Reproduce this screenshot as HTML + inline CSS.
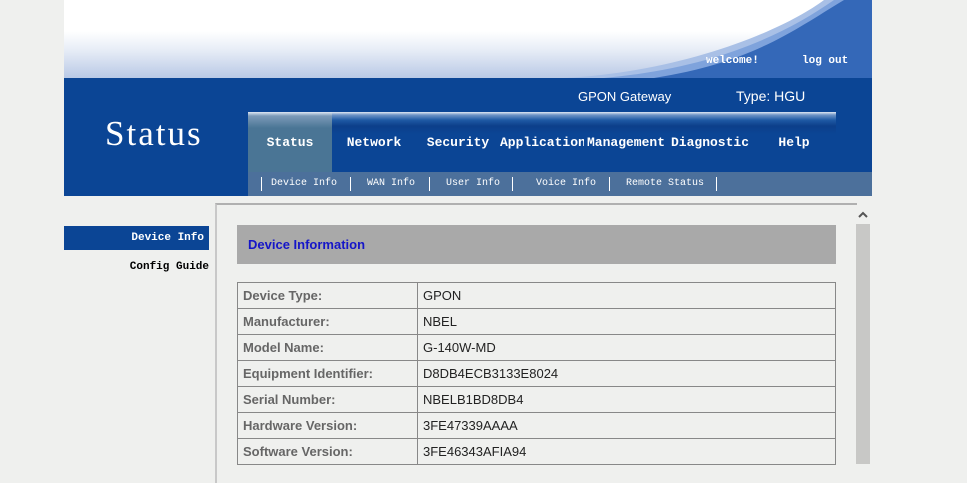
<!DOCTYPE html>
<html><head><style>
body{margin:0;width:967px;height:481px;background:#eff0ee;position:relative;overflow:hidden;font-family:"Liberation Sans",sans-serif}
.abs{position:absolute}
.mono{font-family:"Liberation Mono","Noto Serif CJK SC",monospace;font-weight:bold}
#top{left:64px;top:0;width:808px;height:78px;background:linear-gradient(#fff 0,#fff 40%,#e6ecf6 65%,#b9c9e6 100%);overflow:hidden}
#blue{left:64px;top:78px;width:808px;height:118px;background:#0b4595}
.tab{top:112px;height:60px;width:84px;color:#fff;font-size:13px;text-align:center;line-height:62px;background:linear-gradient(#e0e8f4 0,#6d93c6 3px,#1f5aa5 8px,#0c3f8a 14px,#0b4595 22px)}
.sub{left:248px;top:172px;width:624px;height:24px;background:#4c709b;color:#fff;font-size:10px;line-height:24px;font-family:"Liberation Mono",monospace}
.sub span{position:absolute;top:0}
.sub i{position:absolute;top:5px;width:1px;height:14px;background:#fff}
table{border-collapse:collapse;font-size:13px}
td{border:1px solid #888;height:25px;padding:0 0 0 5px}
td.l{font-weight:bold;color:#666;width:174px}
td.v{color:#222}
</style></head><body>
<div id="top" class="abs">
<svg width="808" height="78" style="position:absolute;left:0;top:0">
<path d="M500 78 C620 72 720 30 760 0 L808 0 L808 78 Z" fill="#a9c0e6"/>
<path d="M540 78 C650 68 720 35 770 0 L808 0 L808 78 Z" fill="#7fa3dc"/>
<path d="M590 78 C690 62 730 30 780 0 L808 0 L808 78 Z" fill="#3468b8"/>
</svg>
<div class="abs mono" style="left:642px;top:55px;font-size:11px;color:#fff">welcome!</div>
<div class="abs mono" style="left:738px;top:55px;font-size:11px;color:#fff">log out</div>
</div>
<div id="blue" class="abs"></div>
<div class="abs" style="left:578px;top:89px;color:#fff;font-size:13px">GPON Gateway</div>
<div class="abs" style="left:736px;top:88px;color:#fff;font-size:14px">Type: HGU</div>
<div class="abs" style="left:105px;top:114px;color:#fff;font-size:35px;letter-spacing:2px;font-family:'Liberation Serif',serif">Status</div>
<div class="abs tab mono" style="left:248px;background:linear-gradient(#e0e8f4 0,#7c9ab8 4px,#4a7595 16px,#4a7595)">Status</div>
<div class="abs tab mono" style="left:332px">Network</div>
<div class="abs tab mono" style="left:416px;">Security</div>
<div class="abs tab mono" style="left:500px">Application</div>
<div class="abs tab mono" style="left:584px">Management</div>
<div class="abs tab mono" style="left:668px">Diagnostic</div>
<div class="abs tab mono" style="left:752px">Help</div>
<div class="abs sub">
<i style="left:13px"></i><span style="left:23px">Device Info</span>
<i style="left:102px"></i><span style="left:119px">WAN Info</span>
<i style="left:181px"></i><span style="left:198px">User Info</span>
<i style="left:264px"></i><span style="left:288px">Voice Info</span>
<i style="left:361px"></i><span style="left:378px">Remote Status</span>
<i style="left:468px"></i>
</div>
<div class="abs mono" style="left:64px;top:226px;width:145px;height:24px;background:#0b4595;color:#fff;font-size:11px;line-height:24px;text-align:right;box-sizing:border-box;padding-right:5px">Device Info</div>
<div class="abs mono" style="left:64px;top:256px;width:145px;height:22px;color:#000;font-size:11px;line-height:22px;text-align:right">Config Guide</div>
<div class="abs" style="left:215px;top:203px;width:640px;height:278px;border-top:2px solid #b0b0b0;border-left:2px solid #c8c8c8;background:#eff0ee"></div>
<div class="abs" style="left:855px;top:205px;width:16px;height:276px;background:#eff0ee"></div>
<div class="abs" style="left:856px;top:224px;width:14px;height:240px;background:#c8c8c6"></div>
<svg class="abs" style="left:857px;top:210px" width="12" height="10"><path d="M2 7 L6 3 L10 7" stroke="#555" stroke-width="2" fill="none"/></svg>
<div class="abs" style="left:237px;top:225px;width:599px;height:39px;background:#a9a9a9"></div>
<div class="abs" style="left:248px;top:237px;font-size:13px;font-weight:bold;color:#1515c8">Device Information</div>
<table class="abs" style="left:237px;top:282px;width:599px">
<tr><td class="l">Device Type:</td><td class="v">GPON</td></tr>
<tr><td class="l">Manufacturer:</td><td class="v">NBEL</td></tr>
<tr><td class="l">Model Name:</td><td class="v">G-140W-MD</td></tr>
<tr><td class="l">Equipment Identifier:</td><td class="v">D8DB4ECB3133E8024</td></tr>
<tr><td class="l">Serial Number:</td><td class="v">NBELB1BD8DB4</td></tr>
<tr><td class="l">Hardware Version:</td><td class="v">3FE47339AAAA</td></tr>
<tr><td class="l">Software Version:</td><td class="v">3FE46343AFIA94</td></tr>
</table>
</body></html>
